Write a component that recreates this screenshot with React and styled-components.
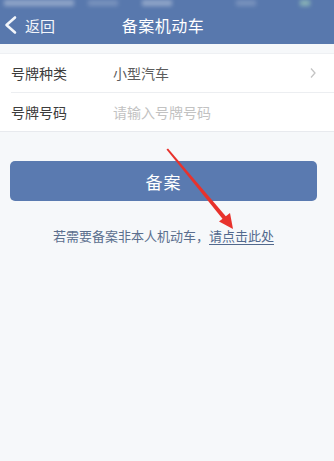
import React from "react";
import styled, { createGlobalStyle } from "styled-components";

const GlobalStyle = createGlobalStyle`
  html, body {
    margin: 0;
    padding: 0;
    background: #f6f8fa;
    font-family: "Noto Sans CJK SC", "Noto Sans", sans-serif;
  }
`;

let Page = styled.div`
  position: relative;
  width: 334px;
  height: 461px;
  background: #f6f8fa;
  overflow: hidden;
`;

let Header = styled.div`
  height: 44px;
  background: #5878ad;
  display: flex;
  align-items: center;
  position: relative;
  color: #fff;
`;

let StatusBlur = styled.div`
  position: absolute;
  top: 0;
  left: 0;
  right: 0;
  height: 8px;
  display: flex;
  gap: 14px;
  padding: 0 4px;
  filter: blur(2px);
`;

let BlurPiece = styled.span`
  height: 6px;
  width: ${(p) => p.w}px;
  margin-left: ${(p) => p.ml || 0}px;
  background: ${(p) => p.c || "rgba(255,255,255,0.35)"};
`;

let Back = styled.div`
  display: flex;
  align-items: center;
  gap: 7px;
  padding-left: 2px;
  padding-top: 6px;
  font-size: 15px;
  color: #f2f5fa;
`;

let Title = styled.div`
  position: absolute;
  left: 0;
  right: 8px;
  top: 6px;
  bottom: 0;
  display: flex;
  align-items: center;
  justify-content: center;
  font-size: 16px;
  letter-spacing: 0.5px;
  pointer-events: none;
`;

let List = styled.div`
  margin-top: 9px;
  background: #fff;
  border-top: 1px solid #eef0f3;
  border-bottom: 1px solid #e8eaee;
`;

let Row = styled.div`
  height: 38px;
  margin-left: 11px;
  padding-right: 17px;
  display: flex;
  align-items: center;
  border-bottom: ${(p) => (p.last ? "none" : "1px solid #eceef1")};
  font-size: 14px;
`;

let Label = styled.span`
  width: 102px;
  color: #3c3c3c;
`;

let Value = styled.span`
  flex: 1;
  color: ${(p) => (p.placeholder ? "#c2c2c2" : "#5c5c5c")};
`;

let Body = styled.div`
  padding: 29px 17px 0 10px;
  display: flex;
  flex-direction: column;
  align-items: stretch;
`;

let SubmitBtn = styled.button`
  height: 40px;
  border: none;
  border-radius: 5px;
  background: #5a7ab0;
  color: #fff;
  font-family: inherit;
  font-size: 17px;
  letter-spacing: 1px;
`;

let Note = styled.p`
  margin: 25px 0 0 0;
  text-align: center;
  font-size: 13px;
  color: #5b6f8e;
`;

let NoteLink = styled.span`
  text-decoration: underline;
  text-underline-offset: 3px;
  color: #52698d;
`;

let ArrowLayer = styled.svg`
  position: absolute;
  left: 0;
  top: 0;
  pointer-events: none;
`;

function App() {
  return (
    <Page>
      <GlobalStyle />
      <Header>
        <StatusBlur>
          <BlurPiece w={70} />
          <BlurPiece w={30} c="rgba(255,255,255,0.2)" />
          <BlurPiece w={30} ml={10} />
          <BlurPiece w={20} ml={50} c="rgba(255,255,255,0.2)" />
          <BlurPiece w={10} ml={30} c="rgba(170,220,190,0.6)" />
        </StatusBlur>
        <Back>
          <svg width="16" height="20" viewBox="0 0 16 20">
            <path
              d="M13 2.5 L4.5 10 L13 17.5"
              fill="none"
              stroke="#f2f5fa"
              strokeWidth="2.6"
              strokeLinecap="round"
              strokeLinejoin="round"
            />
          </svg>
          <span>返回</span>
        </Back>
        <Title>备案机动车</Title>
      </Header>

      <List>
        <Row>
          <Label>号牌种类</Label>
          <Value>小型汽车</Value>
          <svg width="8" height="12" viewBox="0 0 8 12">
            <path
              d="M2 1.5 L6 6 L2 10.5"
              fill="none"
              stroke="#c4c4c4"
              strokeWidth="1.3"
            />
          </svg>
        </Row>
        <Row last>
          <Label>号牌号码</Label>
          <Value placeholder>请输入号牌号码</Value>
        </Row>
      </List>

      <Body>
        <SubmitBtn>备案</SubmitBtn>
        <Note>
          若需要备案非本人机动车，<NoteLink>请点击此处</NoteLink>
        </Note>
      </Body>

      <ArrowLayer width="334" height="461" viewBox="0 0 334 461">
        <polygon points="166.5,149.5 168,148.5 229,220 225.5,222.5" fill="#e8322c" />
        <polygon points="233,229 219,221.5 230,213" fill="#e8322c" />
      </ArrowLayer>
    </Page>
  );
}

export default App;
